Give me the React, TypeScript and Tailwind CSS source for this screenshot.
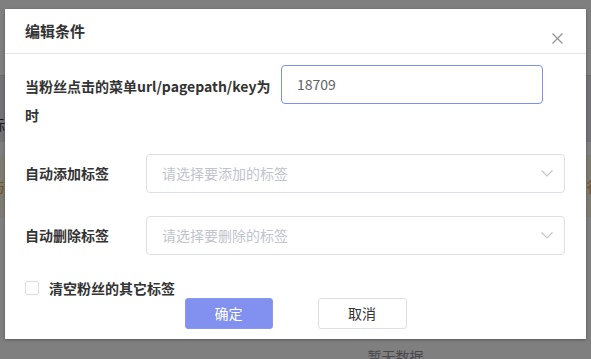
const Chevron = () => (
  <svg width="12" height="7" viewBox="0 0 12 7" fill="none" className="shrink-0">
    <polyline points="0.5,0.5 6,6 11.5,0.5" stroke="#c0c4cc" strokeWidth="1.1" />
  </svg>
);

const CloseIcon = () => (
  <svg width="11" height="11" viewBox="0 0 11 11" fill="none">
    <path d="M0.5 0.5 L10.5 10.5 M10.5 0.5 L0.5 10.5" stroke="#909399" strokeWidth="1.2" />
  </svg>
);

const SelectBox = ({ placeholder }: { placeholder: string }) => (
  <div className="flex h-[39px] w-[419px] items-center justify-between rounded-[4px] border border-[#dcdfe6] bg-white pl-[15px] pr-[11px]">
    <span className="text-[14px] text-[#c0c4cc]">{placeholder}</span>
    <Chevron />
  </div>
);

// page behind the mask, only its edges show
const BackgroundPage = () => (
  <div className="flex h-[359px] w-full flex-col bg-white">
    <div className="h-[75px] shrink-0" />
    <div className="h-px shrink-0 bg-[#d8d8d8]" />
    <div className="flex h-[66px] shrink-0 items-center bg-[#e6e7ee] pt-[30px]">
      <span className="-ml-[9px] text-[14px] text-[#333]">标签</span>
    </div>
    <div className="h-[13px] shrink-0" />
    <div className="flex h-[62px] shrink-0 items-center justify-between bg-[#fdf7e4] text-[14px] text-[#e6a23c]">
      <span className="-ml-[9px]">与]</span>
      <span className="-mr-[10px]">行</span>
    </div>
    <div className="flex flex-1 justify-center pl-[200px] pt-[129px]">
      <span className="text-[14px] leading-[20px] text-[#909399]">暂无数据</span>
    </div>
  </div>
);

export default function App() {
  return (
    <div className="relative h-[359px] w-[591px] overflow-hidden font-['Noto_Sans_CJK_SC',sans-serif]">
      <BackgroundPage />
      <div className="absolute inset-0 bg-black/50">
        <div className="ml-[5px] mt-[9px] flex h-[330px] w-[581px] flex-col bg-white shadow-[0_1px_3px_rgba(0,0,0,0.3)]">
          <div className="flex h-[45px] shrink-0 justify-between border-b border-[#e4e4e4] pl-[20px] pr-[23px]">
            <span className="self-center text-[15px] font-bold text-[#333]">编辑条件</span>
            <div className="mt-[24px] self-start">
              <CloseIcon />
            </div>
          </div>

          <div className="flex flex-col px-[20px] pt-[11px]">
            <div className="flex items-start">
              <div className="w-[256px] shrink-0 pt-[7px] text-[14px] font-bold leading-[29px] text-[#333]">
                <span className="whitespace-nowrap">当粉丝点击的菜单url/pagepath/key为</span>
                <br />时
              </div>
              <div className="flex h-[39px] w-[262px] items-center rounded-[4px] border border-[#7d8ff0] pl-[15px] text-[14px] text-[#606266]">
                18709
              </div>
            </div>

            <div className="mt-[24px] flex items-center">
              <div className="w-[121px] shrink-0 text-[14px] font-bold text-[#333]">自动添加标签</div>
              <SelectBox placeholder="请选择要添加的标签" />
            </div>

            <div className="mt-[23px] flex items-center">
              <div className="w-[121px] shrink-0 text-[14px] font-bold text-[#333]">自动删除标签</div>
              <SelectBox placeholder="请选择要删除的标签" />
            </div>

            <div className="mt-[23px] flex h-[20px] items-center gap-[10px]">
              <div className="h-[14px] w-[14px] rounded-[2px] border border-[#dcdfe6] bg-white" />
              <span className="text-[14px] font-bold text-[#333]">清空粉丝的其它标签</span>
            </div>

            <div className="flex justify-center gap-[45px]">
              <button className="h-[31px] w-[88px] rounded-[3px] border border-[#8a98f0] bg-[#8291ef] text-[14px] text-white">
                确定
              </button>
              <button className="h-[31px] w-[89px] rounded-[3px] border border-[#dcdfe6] bg-white text-[14px] text-[#333]">
                取消
              </button>
            </div>
          </div>
        </div>
      </div>
    </div>
  );
}
